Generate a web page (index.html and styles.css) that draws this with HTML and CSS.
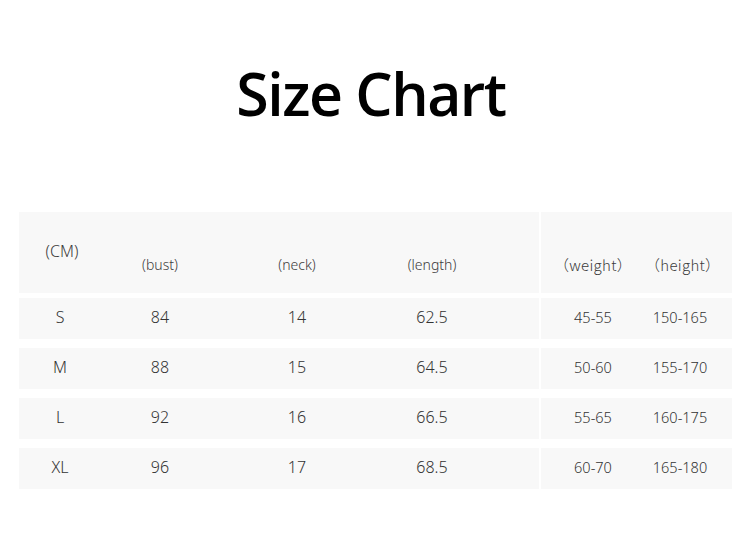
FILE: index.html
```html
<!DOCTYPE html>
<html>
<head>
<meta charset="utf-8">
<link rel="stylesheet" href="styles.css">
</head>
<body>
<h1 class="title">Size Chart</h1>
<div class="chart">
  <div class="row head">
    <div class="panel left">
      <div class="cell cm">(CM)</div>
      <div class="cell low">(bust)</div>
      <div class="cell low">(neck)</div>
      <div class="cell low">(length)</div>
    </div>
    <div class="panel right">
      <div class="cell low">（weight）</div>
      <div class="cell low">（height）</div>
    </div>
  </div>
  <div class="row">
    <div class="panel left"><div class="cell">S</div><div class="cell">84</div><div class="cell">14</div><div class="cell">62.5</div></div>
    <div class="panel right"><div class="cell sm">45-55</div><div class="cell sm">150-165</div></div>
  </div>
  <div class="row">
    <div class="panel left"><div class="cell">M</div><div class="cell">88</div><div class="cell">15</div><div class="cell">64.5</div></div>
    <div class="panel right"><div class="cell sm">50-60</div><div class="cell sm">155-170</div></div>
  </div>
  <div class="row">
    <div class="panel left"><div class="cell">L</div><div class="cell">92</div><div class="cell">16</div><div class="cell">66.5</div></div>
    <div class="panel right"><div class="cell sm">55-65</div><div class="cell sm">160-175</div></div>
  </div>
  <div class="row">
    <div class="panel left"><div class="cell">XL</div><div class="cell">96</div><div class="cell">17</div><div class="cell">68.5</div></div>
    <div class="panel right"><div class="cell sm">60-70</div><div class="cell sm">165-180</div></div>
  </div>
</div>
</body>
</html>
```

FILE: styles.css
```css
html, body {
  margin: 0;
  padding: 0;
  background: #ffffff;
}
body {
  width: 750px;
  height: 546px;
  overflow: hidden;
  font-family: "Noto Sans", "Noto Sans CJK SC", sans-serif;
  color: #333333;
}
.title {
  margin: 0;
  padding: 64px 8px 0 0;
  font-family: "Open Sans", sans-serif;
  font-weight: 600;
  font-size: 59px;
  line-height: 59px;
  text-align: center;
  color: #000;
  letter-spacing: -1.5px;
}
.chart {
  margin: 89px 0 0 19px;
  display: flex;
  flex-direction: column;
  gap: 9px;
}
.chart .head + .row {
  margin-top: -4px;
}
.row {
  display: flex;
  gap: 2px;
  height: 41px;
}
.row.head {
  height: 81px;
}
.panel {
  background: #f8f8f8;
  display: grid;
  align-items: center;
}
.left {
  width: 520px;
  grid-template-columns: 82px 118px 156px 114px 50px;
}
.right {
  width: 191px;
  grid-template-columns: 104px 70px 17px;
}
.cell {
  text-align: center;
  font-size: 16px;
  font-weight: 300;
  line-height: 20px;
  padding-bottom: 3px;
}
.cell.sm {
  font-size: 14.5px;
}
.head .cell {
  font-size: 14px;
  padding-bottom: 0;
  color: #3c3c3c;
}
.head .cm {
  align-self: start;
  margin-top: 29px;
  font-size: 16px;
  padding-left: 4px;
}
.head .low {
  align-self: start;
  margin-top: 43px;
}
.right .cell.low {
  font-family: "Noto Sans CJK SC", sans-serif;
  font-size: 15px;
  letter-spacing: 0.3px;
}
```
